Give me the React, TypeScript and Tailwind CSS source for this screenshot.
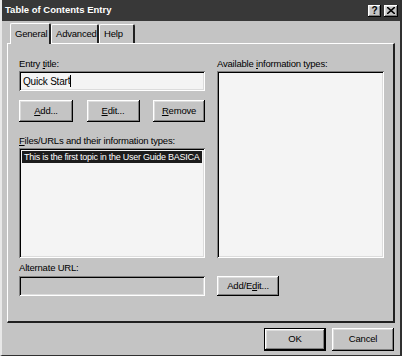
import React from "react";

const raised =
  "shadow-[inset_-1px_-1px_0_#000,inset_1px_1px_0_#fff,inset_-2px_-2px_0_#808080,inset_2px_2px_0_#dcdcdc]";
const sunken =
  "shadow-[inset_1px_1px_0_#808080,inset_-1px_-1px_0_#fff,inset_2px_2px_0_#000,inset_-2px_-2px_0_#dcdcdc]";

const Btn = ({ children, className = "" }: { children: React.ReactNode; className?: string }) => (
  <button className={`bg-[#c4c4c4] text-[9.5px] text-black flex items-center justify-center ${raised} ${className}`}>
    {children}
  </button>
);

const Tab = ({ label, active, className = "" }: { label: string; active?: boolean; className?: string }) => (
  <div
    className={`px-[4px] flex items-center text-[9.5px] border-t border-l border-white border-r-2 border-r-[#202020] rounded-t-[2px] ${
      active ? "bg-[#c4c4c4] h-[21px] -mb-px z-10" : "h-[19px]"
    } ${className}`}
  >
    {label}
  </div>
);

export default function App() {
  return (
    <div
      className="w-[402px] h-[356px] bg-[#c4c4c4] flex flex-col border-l-2 border-l-[#e8e8e8] border-r-2 border-r-[#303030] border-b border-b-[#303030] text-black tracking-[-0.2px]"
      style={{ fontFamily: '"Liberation Sans", Arial, sans-serif' }}
    >
      {/* Title bar */}
      <div className="h-[21px] bg-[#383838] flex items-center justify-between pl-[3px] pr-[2px]">
        <span className="text-white font-bold text-[9.5px] tracking-normal">Table of Contents Entry</span>
        <div className="flex gap-[3px]">
          <div className={`w-[13px] h-[12px] bg-[#c4c4c4] flex items-center justify-center text-[10px] font-bold leading-none ${raised}`}>
            ?
          </div>
          <div className={`w-[14px] h-[12px] bg-[#c4c4c4] flex items-center justify-center ${raised}`}>
            <svg width="8" height="7" viewBox="0 0 8 7">
              <path d="M0 0 L8 7 M8 0 L0 7" stroke="#000" strokeWidth="1.6" />
            </svg>
          </div>
        </div>
      </div>

      {/* Tabs */}
      <div className="flex items-end pl-[8px] mt-[2px] relative">
        <Tab label="General" active className="w-[41px]" />
        <Tab label="Advanced" className="w-[48px]" />
        <Tab label="Help" className="w-[36px]" />
      </div>

      {/* Tab panel */}
      <div className="mx-[5px] h-[280px] border-t border-l border-white border-r-2 border-b-2 border-r-[#202020] border-b-[#202020] pl-[11px] pr-[10px] pt-[11px] text-[9.5px]">
        <div className="grid grid-cols-[186px_167px] gap-x-[12px]">
          {/* Left top */}
          <div className="flex flex-col">
            <div className="leading-[13px] mt-[2px]">
              Entry <span className="underline">t</span>itle:
            </div>
            <div className={`h-[20px] mt-[1px] bg-[#f4f4f4] px-[4px] flex items-center text-[10px] ${sunken}`}>
              Quick Star<span className="border-r border-black h-[12px] leading-[12px]">t</span>
            </div>
            <div className="flex justify-between mt-[9px]">
              <Btn className="w-[54px] h-[22px]">
                <span className="underline">A</span>dd...
              </Btn>
              <Btn className="w-[53px] h-[22px]">
                <span className="underline">E</span>dit...
              </Btn>
              <Btn className="w-[52px] h-[22px]">
                <span className="underline">R</span>emove
              </Btn>
            </div>
            <div className="leading-[13px] mt-[12px] whitespace-nowrap">
              <span className="underline">F</span>iles/URLs and their information types:
            </div>
            <div className={`h-[110px] mt-[1px] bg-[#f4f4f4] p-[3px] ${sunken}`}>
              <div className="bg-[#1c1c1c] text-white text-[9px] tracking-[-0.25px] leading-[12px] h-[12px] whitespace-nowrap overflow-hidden pl-[2px]">
                This is the first topic in the User Guide BASICA
              </div>
            </div>
          </div>

          {/* Right top */}
          <div className="flex flex-col">
            <div className="leading-[13px] mt-[2px]">
              Available <span className="underline">i</span>nformation types:
            </div>
            <div className={`h-[187px] mt-[1px] bg-[#f4f4f4] ${sunken}`} />
          </div>

          {/* Left bottom */}
          <div className="flex flex-col mt-[3px]">
            <div className="leading-[13px]">Alternate URL:</div>
            <div className={`h-[20px] mt-[2px] bg-[#c4c4c4] ${sunken}`} />
          </div>

          {/* Right bottom */}
          <div className="flex items-end mt-[3px]">
            <Btn className="w-[62px] h-[20px]">
              Add/E<span className="underline">d</span>it...
            </Btn>
          </div>
        </div>
      </div>

      {/* Dialog buttons */}
      <div className="flex justify-end gap-[6px] pr-[6px] mt-[5px]">
        <Btn className="w-[62px] h-[23px] border border-black">OK</Btn>
        <Btn className="w-[62px] h-[23px]">Cancel</Btn>
      </div>
    </div>
  );
}
